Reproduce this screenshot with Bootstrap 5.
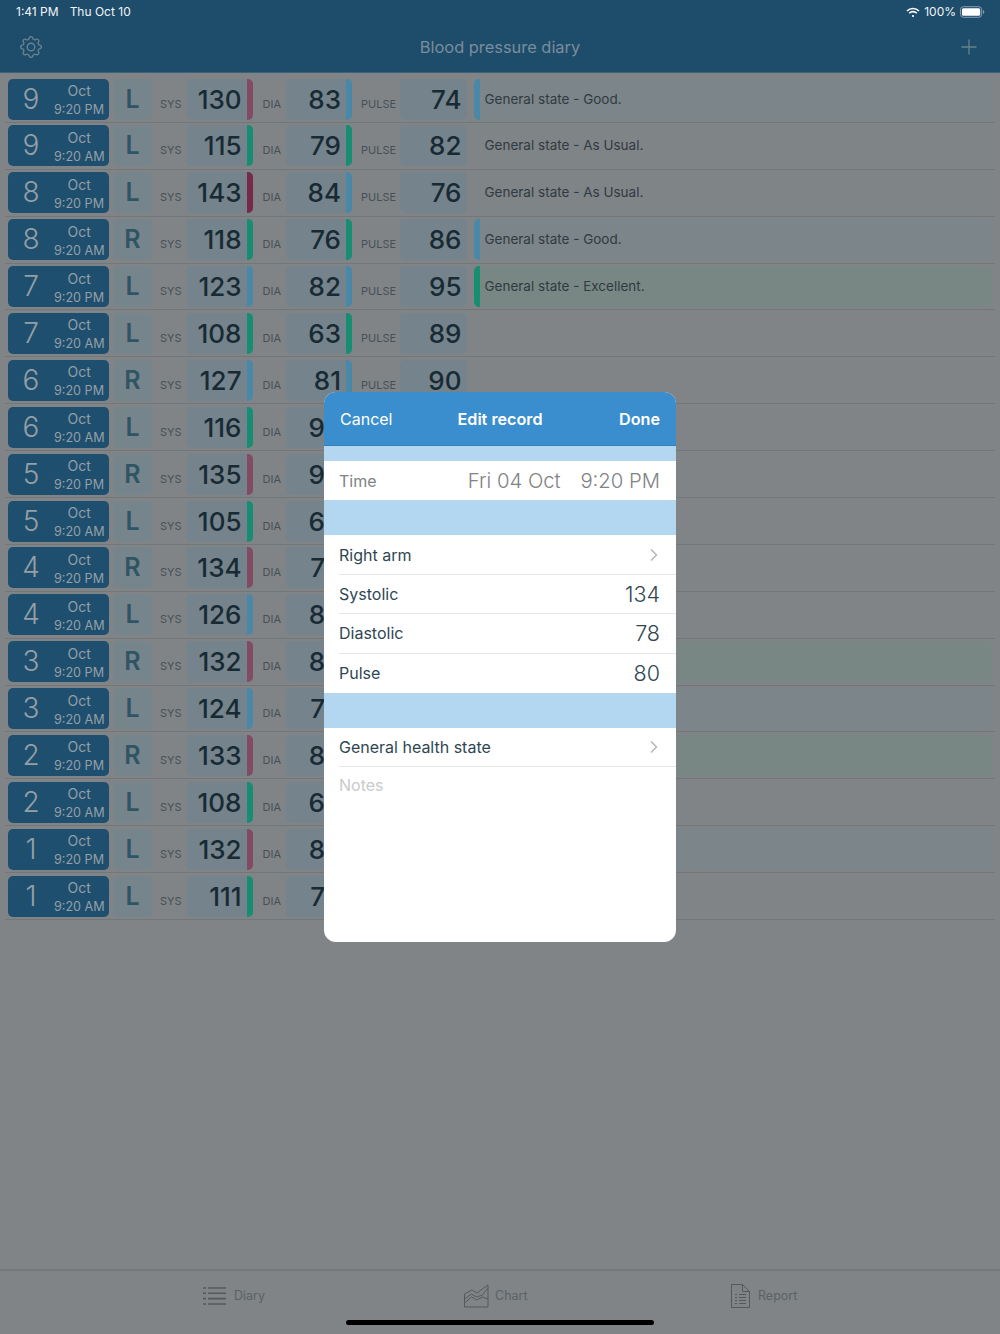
<!DOCTYPE html>
<html lang="en">
<head>
<meta charset="UTF-8" />
<title>Blood pressure diary</title>
<link rel="stylesheet" href="https://cdn.jsdelivr.net/npm/bootstrap@5.3.3/dist/css/bootstrap.min.css" />
<style>
  html, body { height: 100%; }
  body { width: 1000px; height: 1334px; background: #808487; font-family: Inter, "Liberation Sans", sans-serif; overflow: hidden; position: relative; color: #2f3b41; }
  /* header */
  .top-area { background: #1e4c6b; height: 73px; border-bottom: 1px solid #3a6278; }
  .status-line { height: 24px; padding: 0 15px 0 16px; font-size: 12px; color: #f2f5f7; }
  .status-line .when { margin-right: 11px; }
  .head-line { height: 46px; padding: 0 20px; }
  .head-title { font-size: 16.4px; color: #7a8e9b; }
  /* rows */
  .diary-list { padding-top: 3px; }
  .entry { height: 46.9px; margin: 0 5px; padding: 2.5px 3px 0; border-bottom: 1px solid #72777a; }
  .entry > * { height: 41px; flex: none; }
  .date-box { width: 100.5px; background: #1f4f6e; border-radius: 5px; color: #959fa6; }
  .date-day { width: 46px; font-size: 28px; font-weight: 300; text-align: center; line-height: 41px; }
  .date-rest { width: 54.5px; line-height: 19px; padding-top: 2.5px; }
  .date-rest span { display: block; white-space: nowrap; text-align: right; padding-right: 4.5px; font-size: 12.6px; }
  .date-rest span:first-child { text-align: center; font-size: 14px; padding-right: 4px; }
  .arm-box { width: 39px; margin-left: 4.5px; background: #76848c; border-radius: 5px; color: #2f5565; font-size: 25px; font-weight: 600; text-align: center; line-height: 41px; }
  .tag { font-size: 11px; color: #475055; padding-top: 18px; line-height: 14px; }
  .num-box { background: #75838c; border-radius: 5px; width: 66.5px; font-size: 26px; font-weight: 550; color: #182a33; text-align: right; line-height: 41px; position: relative; overflow: hidden; }
  .num-box.has-bar { padding-right: 11px; }
  .num-box.no-bar { padding-right: 5px; }
  .num-box.cut-off { padding-right: 27px; }
  .side-bar { position: absolute; top: 0; right: 0; bottom: 0; width: 6px; }
  .state-box { width: 518px; margin-left: 7px; border-radius: 5px; position: relative; overflow: hidden; font-size: 13.5px; line-height: 41px; padding-left: 11px; color: #2f3b41; }
  .state-box .side-bar { right: auto; left: 0; }
  .good { background: #7c8589; }
  .usual { background: #7f8487; }
  .great { background: #798784; }
  .c-hi { background: #814c62; }
  .c-top { background: #762a47; }
  .c-mid { background: #4a88a8; }
  .c-ok { background: #178d72; }
  /* tab bar */
  .tab-area { position: absolute; left: 0; right: 0; bottom: 0; height: 65px; border-top: 2px solid #75787b; color: #5c6164; font-size: 12.5px; }
  .tab-item { position: absolute; top: 11px; height: 28px; }
  .home-line { position: absolute; left: 346px; top: 49px; width: 308px; height: 5px; border-radius: 3px; background: #000; }
  /* edit record dialog */
  .edit-card { position: absolute; left: 324px; top: 392px; width: 352px; height: 550px; border: 0; border-radius: 12px; overflow: hidden; background: #fff; color: #2f4752; font-size: 16px; }
  .edit-head { height: 54px; background: #3a8ecd; border-bottom: 1px solid #3381bb; padding: 1px 16px 0; color: #fff; font-size: 16px; }
  .edit-head > * { flex: 1; }
  .edit-head b { font-weight: 600; font-size: 16.2px; }
  .gap-a { height: 15px; background: #b3d7f1; }
  .gap-b { height: 35px; background: #b3d7f1; }
  .edit-row { height: 39.4px; padding-right: 16px; margin-left: 15px; border-bottom: 1px solid #e4e6e7; }
  .edit-row svg { margin-right: 2px; }
  .edit-val { font-size: 21.5px; font-weight: 300; }
  .time-val { font-size: 20.3px; font-weight: 300; padding-top: 1px; }
  .time-val span { margin-right: 14px; }
  .is-grey { color: #808285; }
  .notes-hint { margin-left: 15px; padding-top: 6px; color: #c9cacc; }
</style>
</head>
<body>
  <div class="top-area">
    <div class="status-line d-flex align-items-center">
      <span class="when">1:41 PM</span><span>Thu Oct 10</span>
      <span class="ms-auto d-flex align-items-center">
        <svg width="14" height="11" viewBox="0 0 14 11" fill="none" stroke="#fff" stroke-width="1.6" class="me-1"><path d="M1 4a8.6 8.6 0 0 1 12 0" /><path d="M3.2 6.2a5.4 5.4 0 0 1 7.6 0" /><circle cx="7" cy="9" r="1.1" fill="#fff" stroke="none" /></svg>
        <span class="me-1">100%</span>
        <svg width="25" height="12" viewBox="0 0 26 12"><rect x=".5" y=".5" width="22" height="11" rx="3" fill="none" stroke="#8ba3b5" /><rect x="2" y="2" width="19" height="8" rx="1.6" fill="#fff" /><path d="M24 4v4c.8-.3 1.2-1 1.2-2s-.4-1.700-1.200-2z" fill="#8ba3b5" /></svg>
      </span>
    </div>
    <nav class="head-line d-flex align-items-center justify-content-between">
      <svg width="22" height="22" viewBox="0 0 16 16" fill="#68838f"><path d="M8 4.754a3.246 3.246 0 1 0 0 6.492 3.246 3.246 0 0 0 0-6.492zM5.754 8a2.246 2.246 0 1 1 4.492 0 2.246 2.246 0 0 1-4.492 0z" /><path d="M9.796 1.343c-.527-1.79-3.065-1.79-3.592 0l-.094.319a.873.873 0 0 1-1.255.52l-.292-.16c-1.64-.892-3.433.902-2.54 2.541l.159.292a.873.873 0 0 1-.52 1.255l-.319.094c-1.79.527-1.79 3.065 0 3.592l.319.094a.873.873 0 0 1 .52 1.255l-.16.292c-.892 1.64.901 3.434 2.541 2.54l.292-.159a.873.873 0 0 1 1.255.52l.094.319c.527 1.79 3.065 1.79 3.592 0l.094-.319a.873.873 0 0 1 1.255-.52l.292.16c1.64.893 3.434-.902 2.54-2.541l-.159-.292a.873.873 0 0 1 .52-1.255l.319-.094c1.79-.527 1.79-3.065 0-3.592l-.319-.094a.873.873 0 0 1-.52-1.255l.16-.292c.893-1.64-.902-3.433-2.541-2.54l-.292.159a.873.873 0 0 1-1.255-.52l-.094-.319zm-2.633.283c.246-.835 1.428-.835 1.674 0l.094.319a1.873 1.873 0 0 0 2.693 1.115l.291-.16c.764-.415 1.6.42 1.184 1.185l-.159.292a1.873 1.873 0 0 0 1.116 2.692l.318.094c.835.246.835 1.428 0 1.674l-.319.094a1.873 1.873 0 0 0-1.115 2.693l.16.291c.415.764-.42 1.6-1.185 1.184l-.291-.159a1.873 1.873 0 0 0-2.693 1.116l-.094.318c-.246.835-1.428.835-1.674 0l-.094-.319a1.873 1.873 0 0 0-2.692-1.115l-.292.16c-.764.415-1.6-.42-1.184-1.185l.159-.291A1.873 1.873 0 0 0 1.945 8.93l-.319-.094c-.835-.246-.835-1.428 0-1.674l.319-.094A1.873 1.873 0 0 0 3.06 4.377l-.16-.292c-.415-.764.42-1.6 1.185-1.184l.292.159a1.873 1.873 0 0 0 2.692-1.115l.094-.319z" /></svg>
      <span class="head-title">Blood pressure diary</span>
      <svg width="22" height="22" viewBox="0 0 22 22" stroke="#68838f" stroke-width="1.3"><path d="M11 3.500v15M3.500 11h15" /></svg>
    </nav>
  </div>

  <div class="diary-list"></div>

  <div class="tab-area">
    <div class="tab-item d-flex align-items-center gap-2" style="left:203px">
      <svg width="23" height="20" viewBox="0 0 23 20" stroke="#55595c" stroke-width="1.6"><path d="M5 2h18M5 7.300h18M5 12.600h18M5 18h18" /><path d="M0 2h3M0 7.300h3M0 12.600h3M0 18h3" /></svg>
      <span>Diary</span>
    </div>
    <div class="tab-item d-flex align-items-center" style="left:464px">
      <svg width="25" height="24" viewBox="0 0 25 24" fill="none" stroke="#55595c"><path d="M.5 23V10L8 6l5 3 11-8v22z" /><path d="M.5 15l7-5 5 3 6-2 5.500-7" /><path d="M.5 19l7-6 5 3 6-3 5.500 2" /></svg>
      <span style="margin-left:6px">Chart</span>
    </div>
    <div class="tab-item d-flex align-items-center" style="left:731px">
      <svg width="19" height="24" viewBox="0 0 19 24" fill="none" stroke="#55595c"><path d="M.5.500h11l7 7v16H.5z" /><path d="M11.500.500v7h7" /><path d="M8 10.500h7M8 13.500h7M8 16.500h7M8 19.500h7M4 10.500h2M4 13.500h2M4 16.500h2M4 19.500h2" /></svg>
      <span class="ms-2">Report</span>
    </div>
    <div class="home-line"></div>
  </div>

  <div class="card edit-card">
    <div class="edit-head d-flex align-items-center">
      <span>Cancel</span><b class="text-center">Edit record</b><b class="text-end">Done</b>
    </div>
    <div class="gap-a"></div>
    <div class="edit-row d-flex align-items-center justify-content-between is-grey border-0">
      <span>Time</span>
      <span class="time-val"><span>Fri 04 Oct</span> 9:20 PM</span>
    </div>
    <div class="gap-b"></div>
    <div class="edit-row d-flex align-items-center justify-content-between">
      <span>Right arm</span>
      <svg width="8" height="14" viewBox="0 0 8 14" fill="none" stroke="#b5b7b9" stroke-width="1.500"><path d="M1 1.500 6.500 7 1 12.500" /></svg>
    </div>
    <div class="edit-row d-flex align-items-center justify-content-between"><span>Systolic</span><span class="edit-val">134</span></div>
    <div class="edit-row d-flex align-items-center justify-content-between"><span>Diastolic</span><span class="edit-val">78</span></div>
    <div class="edit-row d-flex align-items-center justify-content-between border-0"><span>Pulse</span><span class="edit-val">80</span></div>
    <div class="gap-b"></div>
    <div class="edit-row d-flex align-items-center justify-content-between">
      <span>General health state</span>
      <svg width="8" height="14" viewBox="0 0 8 14" fill="none" stroke="#b5b7b9" stroke-width="1.500"><path d="M1 1.500 6.500 7 1 12.500" /></svg>
    </div>
    <div class="notes-hint">Notes</div>
  </div>

  <script>
    // day, time, arm, sys, sys colour, dia, dia colour, pulse, state
    // rows from the eighth on run under the dialog: only the first dia digit shows
    const rows = [
      [9, "9:20 PM", "L", 130, "c-hi", "83", "c-mid", "74", "Good"],
      [9, "9:20 AM", "L", 115, "c-ok", "79", "c-ok", "82", "As Usual"],
      [8, "9:20 PM", "L", 143, "c-top", "84", "c-mid", "76", "As Usual"],
      [8, "9:20 AM", "R", 118, "c-ok", "76", "c-ok", "86", "Good"],
      [7, "9:20 PM", "L", 123, "c-mid", "82", "c-mid", "95", "Excellent"],
      [7, "9:20 AM", "L", 108, "c-ok", "63", "c-ok", "89", ""],
      [6, "9:20 PM", "R", 127, "c-mid", "81", "c-mid", "90", ""],
      [6, "9:20 AM", "L", 116, "c-ok", "9", "", "", ""],
      [5, "9:20 PM", "R", 135, "c-hi", "9", "", "", ""],
      [5, "9:20 AM", "L", 105, "c-ok", "6", "", "", ""],
      [4, "9:20 PM", "R", 134, "c-hi", "7", "", "", ""],
      [4, "9:20 AM", "L", 126, "c-mid", "8", "", "", ""],
      [3, "9:20 PM", "R", 132, "c-hi", "8", "", "", "Excellent"],
      [3, "9:20 AM", "L", 124, "c-mid", "7", "", "", "Good"],
      [2, "9:20 PM", "R", 133, "c-hi", "8", "", "", "Excellent"],
      [2, "9:20 AM", "L", 108, "c-ok", "6", "", "", ""],
      [1, "9:20 PM", "L", 132, "c-hi", "8", "", "", "Good"],
      [1, "9:20 AM", "L", 111, "c-ok", "7", "", "", ""]
    ];
    const stateStyle = { Good: ["good", "c-mid"], "As Usual": ["usual", ""], Excellent: ["great", "c-ok"] };
    const list = document.querySelector(".diary-list");
    rows.forEach((r, i) => {
      const st = stateStyle[r[8]];
      const hidden = i > 6;
      const row = document.createElement("div");
      row.className = "entry d-flex";
      row.innerHTML = `
        <div class="date-box d-flex">
          <div class="date-day">${r[0]}</div>
          <div class="date-rest"><span>Oct</span><span>${r[1]}</span></div>
        </div>
        <div class="arm-box">${r[2]}</div>
        <div class="tag ms-2 me-1" style="width:22px">SYS</div>
        <div class="num-box has-bar">${r[3]}<i class="side-bar ${r[4]}"></i></div>
        <div class="tag" style="width:33px;padding-left:10px">DIA</div>
        <div class="num-box ${hidden ? "cut-off" : "has-bar"}">${r[5]}${hidden ? "" : `<i class="side-bar ${r[6]}"></i>`}</div>
        <div class="tag" style="width:48px;padding-left:9px">${hidden ? "" : "PULSE"}</div>
        <div class="num-box no-bar">${r[7]}</div>
        ${st ? `<div class="state-box ${st[0]}"><i class="side-bar ${st[1]}"></i>${hidden ? "" : `General state - ${r[8]}.`}</div>` : ""}
      `;
      list.appendChild(row);
    });
  </script>
  <script src="https://cdn.jsdelivr.net/npm/bootstrap@5.3.3/dist/js/bootstrap.bundle.min.js"></script>
</body>
</html>
